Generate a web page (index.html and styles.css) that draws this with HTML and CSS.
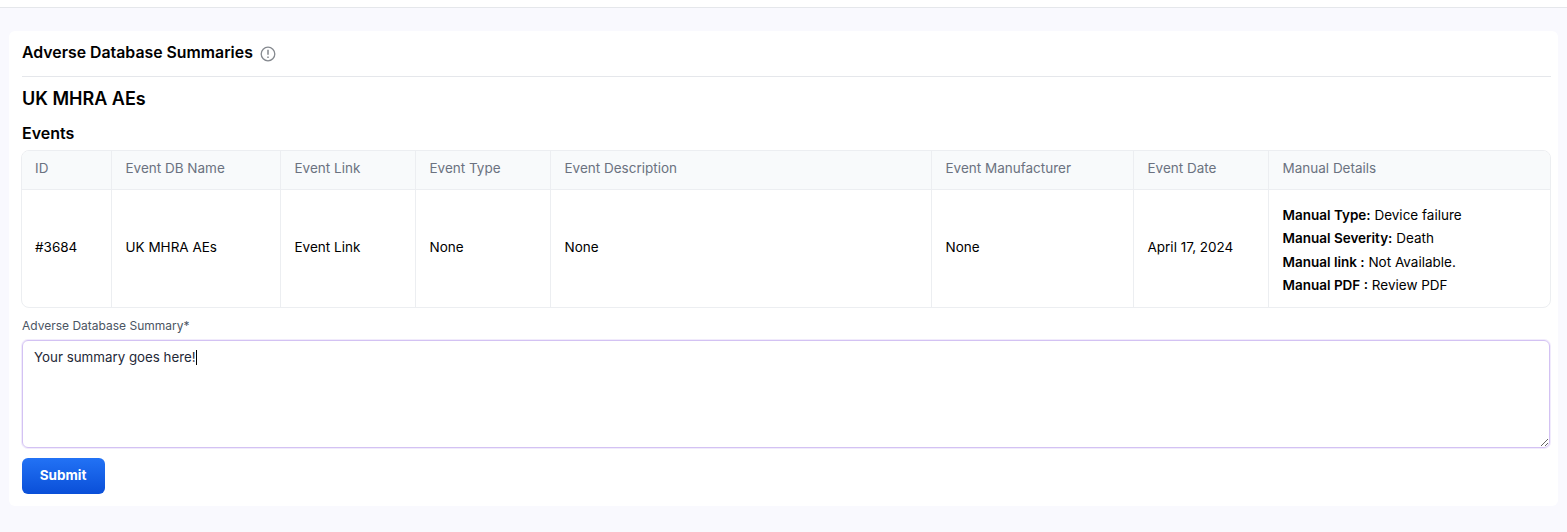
FILE: index.html
```html
<!DOCTYPE html>
<html lang="en">
<head>
<meta charset="UTF-8">
<title>Adverse Database Summaries</title>
<link rel="stylesheet" href="styles.css">
</head>
<body>

<div class="topbar"></div>

<div class="card">
    <div class="card-head">
        <h1>Adverse Database Summaries</h1>
        <svg class="info" width="16" height="16" viewBox="0 0 16 16" fill="none" stroke="#85898f" stroke-width="1.3">
            <circle cx="8" cy="8" r="6.8"/>
            <path d="M8 3.8v5M8 10.4v1.6" stroke-width="1.5"/>
        </svg>
    </div>

    <h2>UK MHRA AEs</h2>
    <h3>Events</h3>

    <div class="table-wrap">
        <table>
            <colgroup>
                <col class="c-id">
                <col class="c-name">
                <col class="c-link">
                <col class="c-type">
                <col class="c-desc">
                <col class="c-manu">
                <col class="c-date">
                <col class="c-details">
            </colgroup>
            <tr>
                <th>ID</th>
                <th>Event DB Name</th>
                <th>Event Link</th>
                <th>Event Type</th>
                <th>Event Description</th>
                <th>Event Manufacturer</th>
                <th>Event Date</th>
                <th>Manual Details</th>
            </tr>
            <tr>
                <td>#3684</td>
                <td>UK MHRA AEs</td>
                <td>Event Link</td>
                <td>None</td>
                <td>None</td>
                <td>None</td>
                <td>April 17, 2024</td>
                <td class="details">
                    <div><b>Manual Type:</b> Device failure</div>
                    <div><b>Manual Severity:</b> Death</div>
                    <div><b>Manual link :</b> Not Available.</div>
                    <div><b>Manual PDF :</b> Review PDF</div>
                </td>
            </tr>
        </table>
    </div>

    <div class="field-label">Adverse Database Summary*</div>
    <div class="summary">Your summary goes here!<span class="caret"></span></div>

    <button class="submit" type="button">Submit</button>
</div>

</body>
</html>
```

FILE: styles.css
```css
* {
    box-sizing: border-box;
}
html, body {
    height: 100%;
}
body {
    margin: 0;
    background-color: #f9f9fe;
    font-family: Inter, "Liberation Sans", sans-serif;
    color: #000;
    overflow: hidden;
}
.topbar {
    height: 8px;
    background-color: #fff;
    border-bottom: 1px solid #e5e7eb;
}
.card {
    margin: 23px 9px 0 9px;
    height: 475px;
    padding: 0 7px 0 13px;
    background-color: #fff;
    border-radius: 6px;
}
.card-head {
    display: flex;
    align-items: center;
    gap: 7px;
    height: 46px;
    border-bottom: 1px solid #e5e7eb;
}
h1 {
    margin: 0 0 2px 0;
    font-size: 15.85px;
    font-weight: 600;
    line-height: 44px;
}
.info {
    margin-top: 1px;
}
h2 {
    margin: 11px 0 0 0;
    font-size: 18px;
    font-weight: 600;
    line-height: 22px;
}
h3 {
    margin: 13px 0 0 0;
    font-size: 16px;
    font-weight: 600;
    line-height: 20px;
}
.table-wrap {
    margin: 7px 0 0 -1px;
    border: 1px solid #eceef1;
    border-radius: 8px;
    overflow: hidden;
}
table {
    width: 100%;
    table-layout: fixed;
    border-collapse: collapse;
    font-size: 13.5px;
}
.c-id { width: 89px; }
.c-name { width: 169px; }
.c-link { width: 135px; }
.c-type { width: 135px; }
.c-desc { width: 381px; }
.c-manu { width: 202px; }
.c-date { width: 135px; }
th, td {
    padding: 0 13px 0 14px;
    border-left: 1px solid #eceef1;
    text-align: left;
    font-weight: 400;
}
th:first-child, td:first-child {
    padding-left: 13px;
    border-left: none;
}
th {
    height: 38px;
    padding-bottom: 3px;
    background-color: #f8fafb;
    color: #6b7280;
    border-bottom: 1px solid #eceef1;
}
td {
    height: 118px;
    padding-bottom: 2px;
}
td.details {
    padding-top: 5px;
    padding-bottom: 0;
}
.details div {
    line-height: 23.6px;
}
.details b {
    font-weight: 600;
}
.field-label {
    margin-top: 10px;
    font-size: 12px;
    line-height: 16px;
    color: #4b5563;
}
.summary {
    margin: 6px 1px 0 0;
    height: 108px;
    padding: 7px 11px;
    font-size: 13.33px;
    line-height: 18px;
    color: #1f2937;
    border: 1px solid #d3c2f3;
    border-radius: 6px;
    box-shadow: 0 0 0 1px #f1ebfc;
    overflow: auto;
    resize: vertical;
}
.caret {
    display: inline-block;
    width: 1px;
    height: 15px;
    background-color: #000;
    vertical-align: -3px;
}
.submit {
    display: block;
    width: 83px;
    height: 36px;
    margin-top: 10px;
    padding: 0 1px 2px 0;
    border: none;
    border-radius: 6px;
    background: linear-gradient(#2272f5, #0a4fd8);
    color: #fff;
    font-family: inherit;
    font-size: 13.5px;
    font-weight: 700;
    cursor: pointer;
}
```
